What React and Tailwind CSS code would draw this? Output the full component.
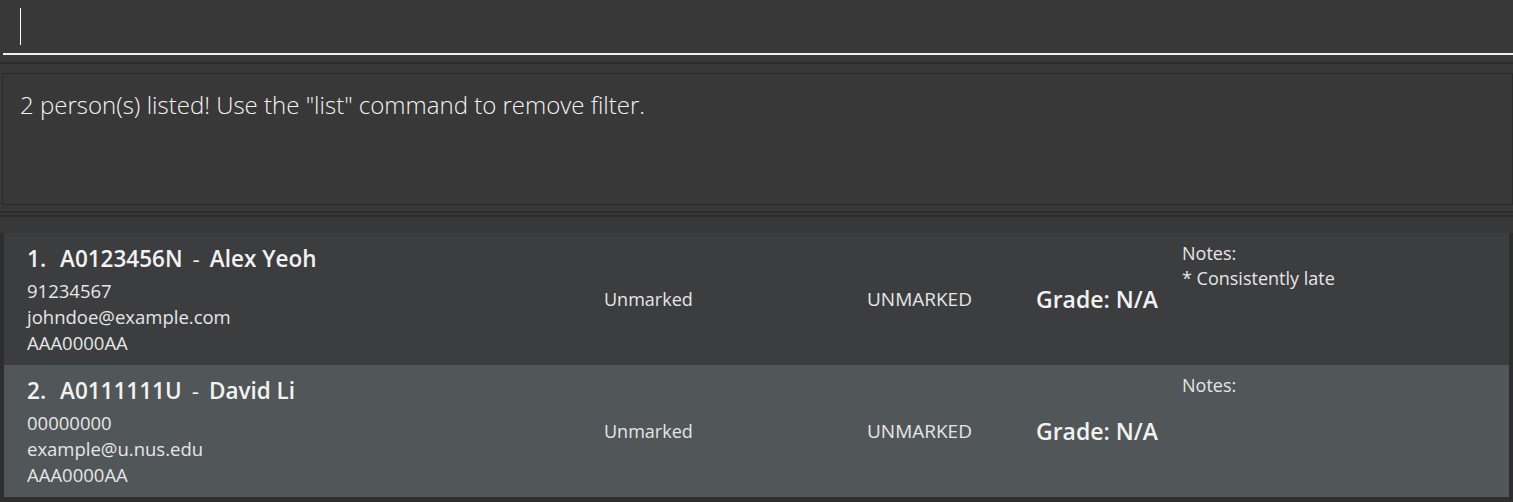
const people = [
  {
    idx: 1,
    id: "A0123456N",
    name: "Alex Yeoh",
    phone: "91234567",
    email: "johndoe@example.com",
    tg: "AAA0000AA",
    notes: ["* Consistently late"],
  },
  {
    idx: 2,
    id: "A0111111U",
    name: "David Li",
    phone: "00000000",
    email: "example@u.nus.edu",
    tg: "AAA0000AA",
    notes: [],
  },
];

function PersonCard({ p, odd }) {
  return (
    <div
      className={`flex h-[132px] items-stretch text-[#e6e6e6] ${
        odd ? "bg-[#3c3d3f]" : "bg-[#515658]"
      }`}
    >
      <div className="flex w-[600px] flex-col pl-[23px] pt-[10px]">
        <div className="flex items-center text-[22.5px] font-semibold leading-[32px] text-[#f2f2f2]">
          <span className="w-[33px]">{p.idx}.</span>
          <span>{p.id}</span>
          <span className="px-[10px] font-normal">-</span>
          <span>{p.name}</span>
        </div>
        <div className="mt-[3px] text-[18.5px] leading-[26px]">
          <div>{p.phone}</div>
          <div>{p.email}</div>
          <div>{p.tg}</div>
        </div>
      </div>
      <div className="flex w-[263px] items-center text-[18px]">Unmarked</div>
      <div className="flex w-[169px] items-center text-[19px]">UNMARKED</div>
      <div className="flex w-[146px] items-center text-[23px] font-semibold text-[#f2f2f2]">
        Grade: N/A
      </div>
      <div className="flex-1 pt-[8px] text-[18px] leading-[25px]">
        <div>Notes:</div>
        {p.notes.map((n) => (
          <div key={n}>{n}</div>
        ))}
      </div>
    </div>
  );
}

export default function App() {
  return (
    <div
      className="flex h-[502px] w-[1513px] flex-col overflow-hidden bg-[#383838]"
      style={{ fontFamily: '"Open Sans", "Noto Sans", sans-serif' }}
    >
      {/* command box */}
      <div className="h-[55px] pl-[3px]">
        <div className="flex h-[55px] items-center border-b-2 border-[#f0f0f0] pl-[17px]">
          <div className="h-[37px] w-px bg-white" />
        </div>
      </div>

      {/* splitter */}
      <div className="mt-[7px] h-[2px] bg-[#2c2c2c]" />
      <div className="h-[9px]" />

      {/* result display */}
      <div className="ml-[2px] h-[132px] border border-[#2a2a2a] bg-[#383838] px-[17px] pt-[13px]">
        <p className="text-[24px] font-light text-[#f4f4f4]">
          2 person(s) listed! Use the "list" command to remove filter.
        </p>
      </div>

      <div className="mt-[6px] h-[2px] bg-[#2c2c2c]" />
      <div className="mt-[2px] h-[2px] bg-[#2c2c2c]" />

      {/* list */}
      <div className="flex-1 bg-[#2e2e2e] pt-[16px]">
        <div className="-mt-[16px] h-[16px] bg-[#383838]" />
        <div className="mr-[4px] ml-[4px] flex flex-col">
          {people.map((p, i) => (
            <PersonCard key={p.id} p={p} odd={i % 2 === 0} />
          ))}
        </div>
      </div>
    </div>
  );
}
